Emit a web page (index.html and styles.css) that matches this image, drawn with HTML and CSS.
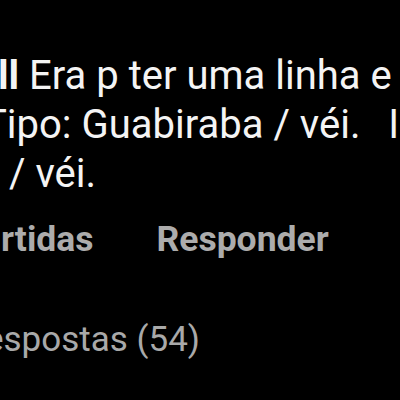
FILE: index.html
```html
<!DOCTYPE html>
<html>
<head>
    <title>Comentário</title>
    <link rel="stylesheet" href="styles.css">
</head>
<body>
    <div class="comment">
        <div class="comment-text">
            <div class="line first"><b>ll</b> Era p ter uma linha e</div>
            <div class="line second">Tipo: Guabiraba / véi.&nbsp; <span class="next">I</span></div>
            <div class="line third">/ véi.</div>
        </div>
        <div class="actions">
            <span class="likes">rtidas</span>
            <span class="reply">Responder</span>
        </div>
        <div class="replies">espostas (54)</div>
    </div>
</body>
</html>
```

FILE: styles.css
```css
html, body {
    margin: 0;
    background: #000;
}
body {
    width: 400px;
    height: 400px;
    overflow: hidden;
    font-family: Roboto, "Noto Sans", sans-serif;
}
.comment {
    padding-top: 51px;
}
.comment-text {
    color: #f4f4f4;
    font-size: 40px;
    line-height: 49px;
}
.line {
    white-space: nowrap;
}
.first {
    margin-left: -2px;
}
.first b {
    font-weight: 700;
}
.second {
    margin-left: -17px;
}
.second .next {
    margin-left: 8px;
}
.third {
    margin-left: 9px;
}
.actions {
    display: flex;
    gap: 63px;
    margin-top: 21px;
    color: #acacac;
    font-size: 35.5px;
    font-weight: 700;
    line-height: 40px;
}
.likes {
    margin-left: 1px;
}
.replies {
    margin-top: 57px;
    margin-left: -15px;
    color: #a9a9a9;
    font-size: 35px;
    line-height: 48px;
}
```
